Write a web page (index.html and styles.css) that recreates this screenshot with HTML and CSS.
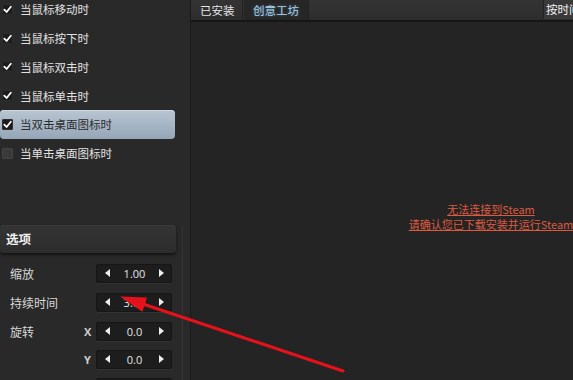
FILE: index.html
```html
<!DOCTYPE html>
<html lang="zh-CN">
<head>
<meta charset="utf-8">
<title>Wallpaper</title>
<link rel="stylesheet" href="styles.css">
</head>
<body>
<div class="app">
  <aside class="sidebar">
    <ul class="checks">
      <li class="check on"><span class="box"><svg viewBox="0 0 11 11"><path d="M2.3 5.6 L4.6 8 L8.8 2.8"/></svg></span>当鼠标移动时</li>
      <li class="check on"><span class="box"><svg viewBox="0 0 11 11"><path d="M2.3 5.6 L4.6 8 L8.8 2.8"/></svg></span>当鼠标按下时</li>
      <li class="check on"><span class="box"><svg viewBox="0 0 11 11"><path d="M2.3 5.6 L4.6 8 L8.8 2.8"/></svg></span>当鼠标双击时</li>
      <li class="check on"><span class="box"><svg viewBox="0 0 11 11"><path d="M2.3 5.6 L4.6 8 L8.8 2.8"/></svg></span>当鼠标单击时</li>
      <li class="check on selected"><span class="box"><svg viewBox="0 0 11 11"><path d="M2.3 5.6 L4.6 8 L8.8 2.8"/></svg></span>当双击桌面图标时</li>
      <li class="check"><span class="box"></span>当单击桌面图标时</li>
    </ul>
    <section class="options">
      <div class="opt-head">选项</div>
      <div class="opt-row"><span class="opt-label">缩放</span><span class="axis"></span><div class="spin"><span class="tri left"></span><span class="val">1.00</span><span class="tri right"></span></div></div>
      <div class="opt-row"><span class="opt-label">持续时间</span><span class="axis"></span><div class="spin"><span class="tri left"></span><span class="val">3.00</span><span class="tri right"></span></div></div>
      <div class="opt-row"><span class="opt-label">旋转</span><span class="axis">X</span><div class="spin"><span class="tri left"></span><span class="val">0.0</span><span class="tri right"></span></div></div>
      <div class="opt-row short"><span class="opt-label"></span><span class="axis">Y</span><div class="spin"><span class="tri left"></span><span class="val">0.0</span><span class="tri right"></span></div></div>
      <div class="opt-row"><span class="opt-label"></span><span class="axis"></span><div class="spin"></div></div>
    </section>
  </aside>
  <main class="main">
    <nav class="tabs">
      <span class="tab">已安装</span>
      <span class="tab active">创意工坊</span>
      <span class="sort">按时间</span>
    </nav>
    <div class="content">
      <p class="msg"><span>无法连接到Steam</span><br><span>请确认您已下载安装并运行Steam</span></p>
    </div>
  </main>
  <svg class="arrow" viewBox="0 0 573 380" width="573" height="380">
    <line x1="343" y1="371" x2="140" y2="303" stroke="#e5121b" stroke-width="3" stroke-linecap="round"/>
    <polygon points="120,296.5 142.4,311.7 147,297.5" fill="#e5121b"/>
  </svg>
</div>
</body>
</html>
```
FILE: styles.css
```css
* { box-sizing: border-box; }
html, body { margin: 0; padding: 0; }
body {
  width: 573px;
  height: 380px;
  overflow: hidden;
  background: #2a2a2a;
  font-family: "Open Sans", "Noto Sans CJK SC", sans-serif;
  color: #dcdcdc;
}
.app {
  position: relative;
  display: flex;
  width: 573px;
  height: 380px;
  overflow: hidden;
}
.sidebar {
  width: 190px;
  flex: none;
  background: #292929;
  display: flex;
  flex-direction: column;
}
.checks {
  list-style: none;
  margin: -5px 0 0;
  padding: 0;
}
.check {
  height: 28.75px;
  width: 175px;
  display: flex;
  align-items: center;
  padding-left: 2px;
  font-size: 11.5px;
  font-family: "Noto Sans CJK SC", sans-serif;
  color: #e2e2e2;
  border-radius: 4px;
}
.box {
  width: 11px;
  height: 11px;
  margin-right: 7px;
  border-radius: 2px;
  background: #3a3a3a;
  box-shadow: inset 0 0 0 1px #444;
  display: flex;
}
.check.on .box {
  background: #1c1c1c;
  box-shadow: inset 0 0 0 1px #2e2e2e;
}
.box svg { width: 11px; height: 11px; }
.box path {
  fill: none;
  stroke: #fff;
  stroke-width: 1.8;
  stroke-linecap: round;
  stroke-linejoin: round;
}
.check.selected {
  background: linear-gradient(#b8c5d2, #95a6b8);
  color: #2c2c2c;
  box-shadow: inset 0 1px 0 #cdd7e1;
}
.options {
  margin-top: 57px;
  width: 183px;
  flex: 1;
  border-right: 1px solid #343434;
}
.opt-head {
  width: 176px;
  height: 28px;
  border-radius: 4px;
  background: linear-gradient(#343434, #2d2d2d);
  box-shadow: 0 2px 3px rgba(0,0,0,.55), inset 0 1px 0 #3c3c3c;
  font-family: "Noto Sans CJK SC", sans-serif;
  font-weight: bold;
  font-size: 12.5px;
  color: #f0f0f0;
  display: flex;
  align-items: center;
  padding-left: 6px;
  margin-bottom: 6px;
}
.opt-row {
  height: 29px;
  display: grid;
  grid-template-columns: 74px 12px 76px;
  align-items: center;
  padding-left: 10px;
}
.opt-row.short { height: 27px; }
.opt-label {
  font-family: "Noto Sans CJK SC", sans-serif;
  font-size: 12px;
  color: #d8d8d8;
}
.axis {
  font-size: 11px;
  font-weight: bold;
  color: #cfcfcf;
}
.spin {
  height: 19px;
  border-radius: 3px;
  background: #1d1d1d;
  box-shadow: inset 0 0 0 1px #161616, 0 1px 0 #333;
  display: flex;
  align-items: center;
  justify-content: space-between;
  padding: 0 8px 0 9px;
}
.val {
  font-size: 11px;
  color: #e4e4e4;
}
.tri {
  width: 0;
  height: 0;
  border-top: 4px solid transparent;
  border-bottom: 4px solid transparent;
}
.tri.left { border-right: 5px solid #eee; }
.tri.right { border-left: 5px solid #eee; }
.main {
  flex: 1;
  display: flex;
  flex-direction: column;
  min-width: 0;
  border-left: 1px solid #1a1a1a;
}
.tabs {
  height: 22px;
  flex: none;
  display: flex;
  align-items: stretch;
  background: linear-gradient(#343434, #2d2d2d);
  border-bottom: 2px solid #161616;
}
.tab {
  font-family: "Noto Sans CJK SC", sans-serif;
  font-size: 11.5px;
  color: #e6e6e6;
  display: flex;
  align-items: center;
  white-space: nowrap;
  padding: 0 9px 0 9px;
  width: 52px;
  border-right: 1px solid #222;
}
.tab.active {
  width: 65px;
  margin-left: 1px;
  background: #262626;
  color: #a9d3ee;
  text-shadow: 0 0 3px rgba(120,190,240,.5);
}
.sort {
  margin-left: auto;
  width: 30px;
  height: 19px;
  background: #3a3a3a;
  border-left: 1px solid #222;
  font-family: "Noto Sans CJK SC", sans-serif;
  font-size: 11.5px;
  color: #f2f2f2;
  white-space: nowrap;
  overflow: hidden;
  padding-left: 2px;
  line-height: 19px;
}
.content {
  flex: 1;
  background: #242424;
  overflow: hidden;
}
.msg {
  width: 600px;
  margin: 0;
  padding-top: 180px;
  text-align: center;
  font-family: "Noto Sans CJK SC", sans-serif;
  font-size: 11px;
  line-height: 15px;
  color: #dc5a40;
}
.msg span { text-decoration: underline; }
.arrow {
  position: absolute;
  left: 0;
  top: 0;
  pointer-events: none;
}
```
